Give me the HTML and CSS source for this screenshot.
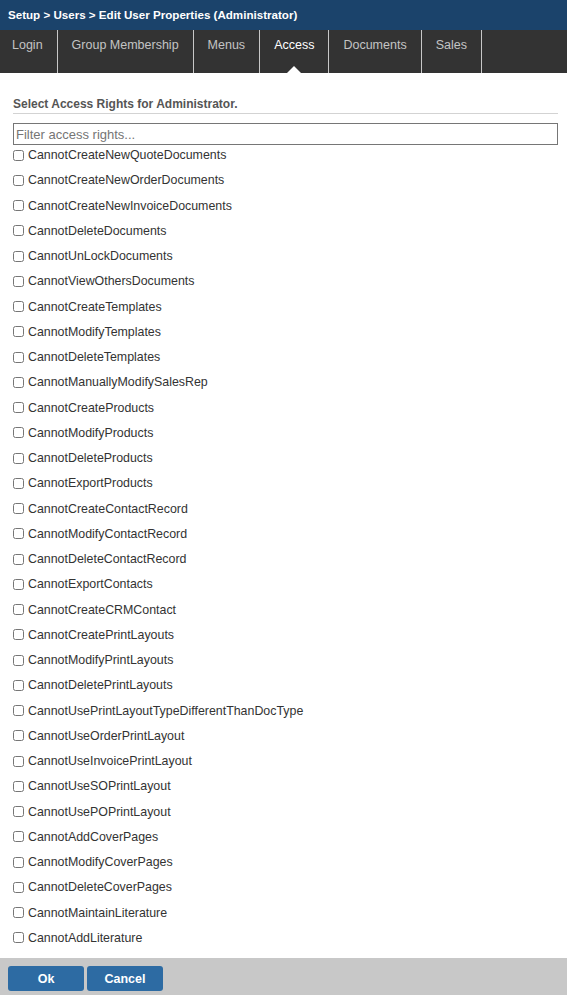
FILE: index.html
```html
<!DOCTYPE html>
<html>
<head>
<meta charset="utf-8">
<link rel="stylesheet" href="styles.css">
</head>
<body>
<div class="page">
<div class="titlebar">Setup &gt; Users &gt; Edit User Properties (Administrator)</div>
<nav class="tabs">
  <div class="tab">Login</div>
  <div class="tab">Group Membership</div>
  <div class="tab">Menus</div>
  <div class="tab active">Access</div>
  <div class="tab">Documents</div>
  <div class="tab">Sales</div>
</nav>
<main class="content">
  <h2 class="section-title">Select Access Rights for Administrator.</h2>
  <input class="filter" type="text" placeholder="Filter access rights...">
  <ul class="rights">
    <li><label><input type="checkbox"> CannotCreateNewQuoteDocuments</label></li>
    <li><label><input type="checkbox"> CannotCreateNewOrderDocuments</label></li>
    <li><label><input type="checkbox"> CannotCreateNewInvoiceDocuments</label></li>
    <li><label><input type="checkbox"> CannotDeleteDocuments</label></li>
    <li><label><input type="checkbox"> CannotUnLockDocuments</label></li>
    <li><label><input type="checkbox"> CannotViewOthersDocuments</label></li>
    <li><label><input type="checkbox"> CannotCreateTemplates</label></li>
    <li><label><input type="checkbox"> CannotModifyTemplates</label></li>
    <li><label><input type="checkbox"> CannotDeleteTemplates</label></li>
    <li><label><input type="checkbox"> CannotManuallyModifySalesRep</label></li>
    <li><label><input type="checkbox"> CannotCreateProducts</label></li>
    <li><label><input type="checkbox"> CannotModifyProducts</label></li>
    <li><label><input type="checkbox"> CannotDeleteProducts</label></li>
    <li><label><input type="checkbox"> CannotExportProducts</label></li>
    <li><label><input type="checkbox"> CannotCreateContactRecord</label></li>
    <li><label><input type="checkbox"> CannotModifyContactRecord</label></li>
    <li><label><input type="checkbox"> CannotDeleteContactRecord</label></li>
    <li><label><input type="checkbox"> CannotExportContacts</label></li>
    <li><label><input type="checkbox"> CannotCreateCRMContact</label></li>
    <li><label><input type="checkbox"> CannotCreatePrintLayouts</label></li>
    <li><label><input type="checkbox"> CannotModifyPrintLayouts</label></li>
    <li><label><input type="checkbox"> CannotDeletePrintLayouts</label></li>
    <li><label><input type="checkbox"> CannotUsePrintLayoutTypeDifferentThanDocType</label></li>
    <li><label><input type="checkbox"> CannotUseOrderPrintLayout</label></li>
    <li><label><input type="checkbox"> CannotUseInvoicePrintLayout</label></li>
    <li><label><input type="checkbox"> CannotUseSOPrintLayout</label></li>
    <li><label><input type="checkbox"> CannotUsePOPrintLayout</label></li>
    <li><label><input type="checkbox"> CannotAddCoverPages</label></li>
    <li><label><input type="checkbox"> CannotModifyCoverPages</label></li>
    <li><label><input type="checkbox"> CannotDeleteCoverPages</label></li>
    <li><label><input type="checkbox"> CannotMaintainLiterature</label></li>
    <li><label><input type="checkbox"> CannotAddLiterature</label></li>
    <li><label><input type="checkbox"> CannotDeleteLiterature</label></li>
  </ul>
</main>
<footer class="actions">
  <button class="btn">Ok</button>
  <button class="btn">Cancel</button>
</footer>
</div>
</body>
</html>
```

FILE: styles.css
```css
html, body {
  margin: 0;
  padding: 0;
  height: 100%;
  overflow: hidden;
  background: #fff;
  font-family: "Liberation Sans", Arial, sans-serif;
  font-size: 12px;
  color: #333;
}

.page {
  display: flex;
  flex-direction: column;
  height: 100%;
}

.titlebar {
  flex: none;
  height: 30px;
  line-height: 30px;
  background: #1b436b;
  color: #fff;
  font-weight: bold;
  padding-left: 8px;
  font-size: 11.6px;
}

.tabs {
  flex: none;
  display: flex;
  height: 43px;
  background: #333333;
}

.tab {
  position: relative;
  padding: 0 14px 0 14px;
  height: 43px;
  line-height: 30px;
  color: #c4c4c4;
  border-right: 1px solid #c8c8c8;
  font-size: 12.5px;
}

.tab:first-child {
  padding-left: 12px;
}

.tab.active {
  color: #fff;
}

.tab.active::after {
  content: "";
  position: absolute;
  left: 50%;
  bottom: 0;
  margin-left: -7px;
  border-left: 7px solid transparent;
  border-right: 7px solid transparent;
  border-bottom: 7px solid #fff;
}

.content {
  flex: 1 1 auto;
  min-height: 0;
  overflow: hidden;
  padding: 24px 9px 0 13px;
}

.section-title {
  margin: 0;
  font-size: 12px;
  font-weight: bold;
  color: #555;
  padding-bottom: 2px;
  border-bottom: 1px solid #d3d3d3;
}

.filter {
  display: block;
  box-sizing: border-box;
  width: 100%;
  height: 22px;
  margin: 9px 0 0 0;
  padding: 0 2px;
  border: 1px solid #767676;
  font-family: "Liberation Sans", Arial, sans-serif;
  font-size: 13px;
  color: #333;
  outline: none;
}

.filter::placeholder {
  color: #757575;
}

.rights {
  list-style: none;
  margin: 0;
  padding: 0;
}

.rights li {
  height: 25.25px;
  display: flex;
  align-items: flex-start;
}

.rights label {
  display: flex;
  align-items: center;
  height: 20px;
  color: #333;
  font-size: 12.4px;
}

.rights input[type="checkbox"] {
  width: 11px;
  height: 11px;
  margin: 0 4px 0 0;
}

.actions {
  flex: none;
  height: 37px;
  background: #c8c8c8;
  display: flex;
  align-items: flex-start;
  gap: 3px;
  padding: 8px 0 0 8px;
  box-sizing: border-box;
}

.btn {
  width: 76px;
  height: 25px;
  background: #2d6ba3;
  border: 0;
  border-radius: 3px;
  color: #fff;
  font-family: "Liberation Sans", Arial, sans-serif;
  font-weight: bold;
  font-size: 12.5px;
  padding: 0;
}
```
